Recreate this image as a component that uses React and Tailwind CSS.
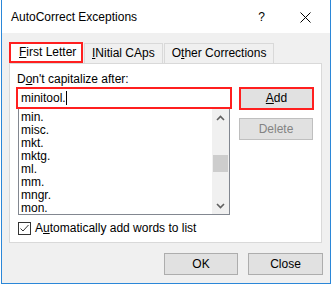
import React from "react";

const words = ["min.", "misc.", "mkt.", "mktg.", "ml.", "mm.", "mngr.", "mon."];

const Tab = ({ children, active }) => (
  <div
    className={
      active
        ? "h-[21px] w-[74px] border-2 border-[#ff1f1f] bg-white flex items-center pl-[8px]"
        : "h-[20px] mt-[1px] border-x border-t border-[#d9d9d9] bg-[#f0f0f0] flex items-center px-[7px]"
    }
  >
    {children}
  </div>
);

const App = () => {
  return (
    <div className="w-[333px] h-[287px] bg-white font-['Liberation_Sans',sans-serif] text-[12px] leading-[15px] text-black">
      <div className="ml-[1px] w-[330px] h-[284px] border-x border-b border-[#2b87d8] bg-[#f0f0f0] flex flex-col">
        {/* title bar */}
        <div className="h-[33px] bg-white flex items-center pl-[9px] pt-[2px]">
          <span className="flex-1">AutoCorrect Exceptions</span>
          <span className="mr-[35px]">?</span>
          <svg width="11" height="11" viewBox="0 0 11 11" className="mr-[19px]">
            <path d="M0.5 0.5L10.5 10.5M10.5 0.5L0.5 10.5" stroke="#000" strokeWidth="1" />
          </svg>
        </div>

        {/* tabs */}
        <div className="pt-[9px] pl-[7px] flex flex-col">
          <div className="flex gap-[1px]">
            <Tab active>
              <span>
                <span className="underline underline-offset-[1px]">F</span>irst Letter
              </span>
            </Tab>
            <Tab>
              <span>
                <span className="underline underline-offset-[1px]">I</span>Nitial CAps
              </span>
            </Tab>
            <Tab>
              <span>
                O<span className="underline underline-offset-[1px]">t</span>her Corrections
              </span>
            </Tab>
          </div>

          {/* panel */}
          <div className="w-[313px] h-[180px] bg-white border border-[#d9d9d9] flex flex-col">
            <div className="mt-[8px] pl-[7px] h-[15px]">
              D<span className="underline underline-offset-[1px]">o</span>n't capitalize after:
            </div>

            <div className="flex ml-[6px] gap-[7px]">
              <div className="flex flex-col">
                <div className="w-[216px] h-[22px] border-2 border-[#ff1f1f] flex items-center pl-[3px]">
                  <span>minitool.</span>
                  <span className="w-[1px] h-[14px] bg-black" />
                </div>
                <div className="ml-[2px] w-[212px] h-[106px] border-x border-b border-[#828790] flex">
                  <div className="flex-1 pl-[2px] pt-[2px] flex flex-col">
                    {words.map((w) => (
                      <div key={w} className="h-[13px] leading-[13px]">
                        {w}
                      </div>
                    ))}
                  </div>
                  <div className="w-[17px] bg-[#f0f0f0] flex flex-col items-center">
                    <svg width="9" height="17" viewBox="0 0 9 17" className="mt-[1px]">
                      <path d="M1 10L4.5 6.5L8 10" stroke="#606060" strokeWidth="1.6" fill="none" />
                    </svg>
                    <div className="mt-[28px] w-[15px] h-[17px] bg-[#cdcdcd]" />
                    <div className="flex-1" />
                    <svg width="9" height="17" viewBox="0 0 9 17">
                      <path d="M1 7L4.5 10.5L8 7" stroke="#606060" strokeWidth="1.6" fill="none" />
                    </svg>
                  </div>
                </div>
              </div>

              <div className="flex flex-col">
                <div className="w-[75px] h-[23px] border-2 border-[#ff1f1f] bg-[#e1e1e1] flex items-center justify-center">
                  <span>
                    <span className="underline underline-offset-[1px]">A</span>dd
                  </span>
                </div>
                <div className="mt-[8px] w-[74px] h-[22px] border border-[#bfbfbf] bg-[#e1e1e1] text-[#838383] flex items-center justify-center">
                  Delete
                </div>
              </div>
            </div>

            <div className="mt-[6px] ml-[8px] flex items-center">
              <svg width="13" height="13" viewBox="0 0 13 13">
                <rect x="0.5" y="0.5" width="12" height="12" fill="#fff" stroke="#333" />
                <path d="M2.5 6.5L5 9L10.5 3" stroke="#333" strokeWidth="1" fill="none" />
              </svg>
              <span className="ml-[4px]">
                A<span className="underline underline-offset-[1px]">u</span>tomatically add words to list
              </span>
            </div>
          </div>
        </div>

        {/* footer */}
        <div className="mt-[10px] pr-[7px] flex justify-end gap-[10px]">
          <div className="w-[74px] h-[22px] border border-[#adadad] bg-[#e1e1e1] flex items-center justify-center">
            OK
          </div>
          <div className="w-[75px] h-[22px] border border-[#adadad] bg-[#e1e1e1] flex items-center justify-center">
            Close
          </div>
        </div>
      </div>
    </div>
  );
};

export default App;
